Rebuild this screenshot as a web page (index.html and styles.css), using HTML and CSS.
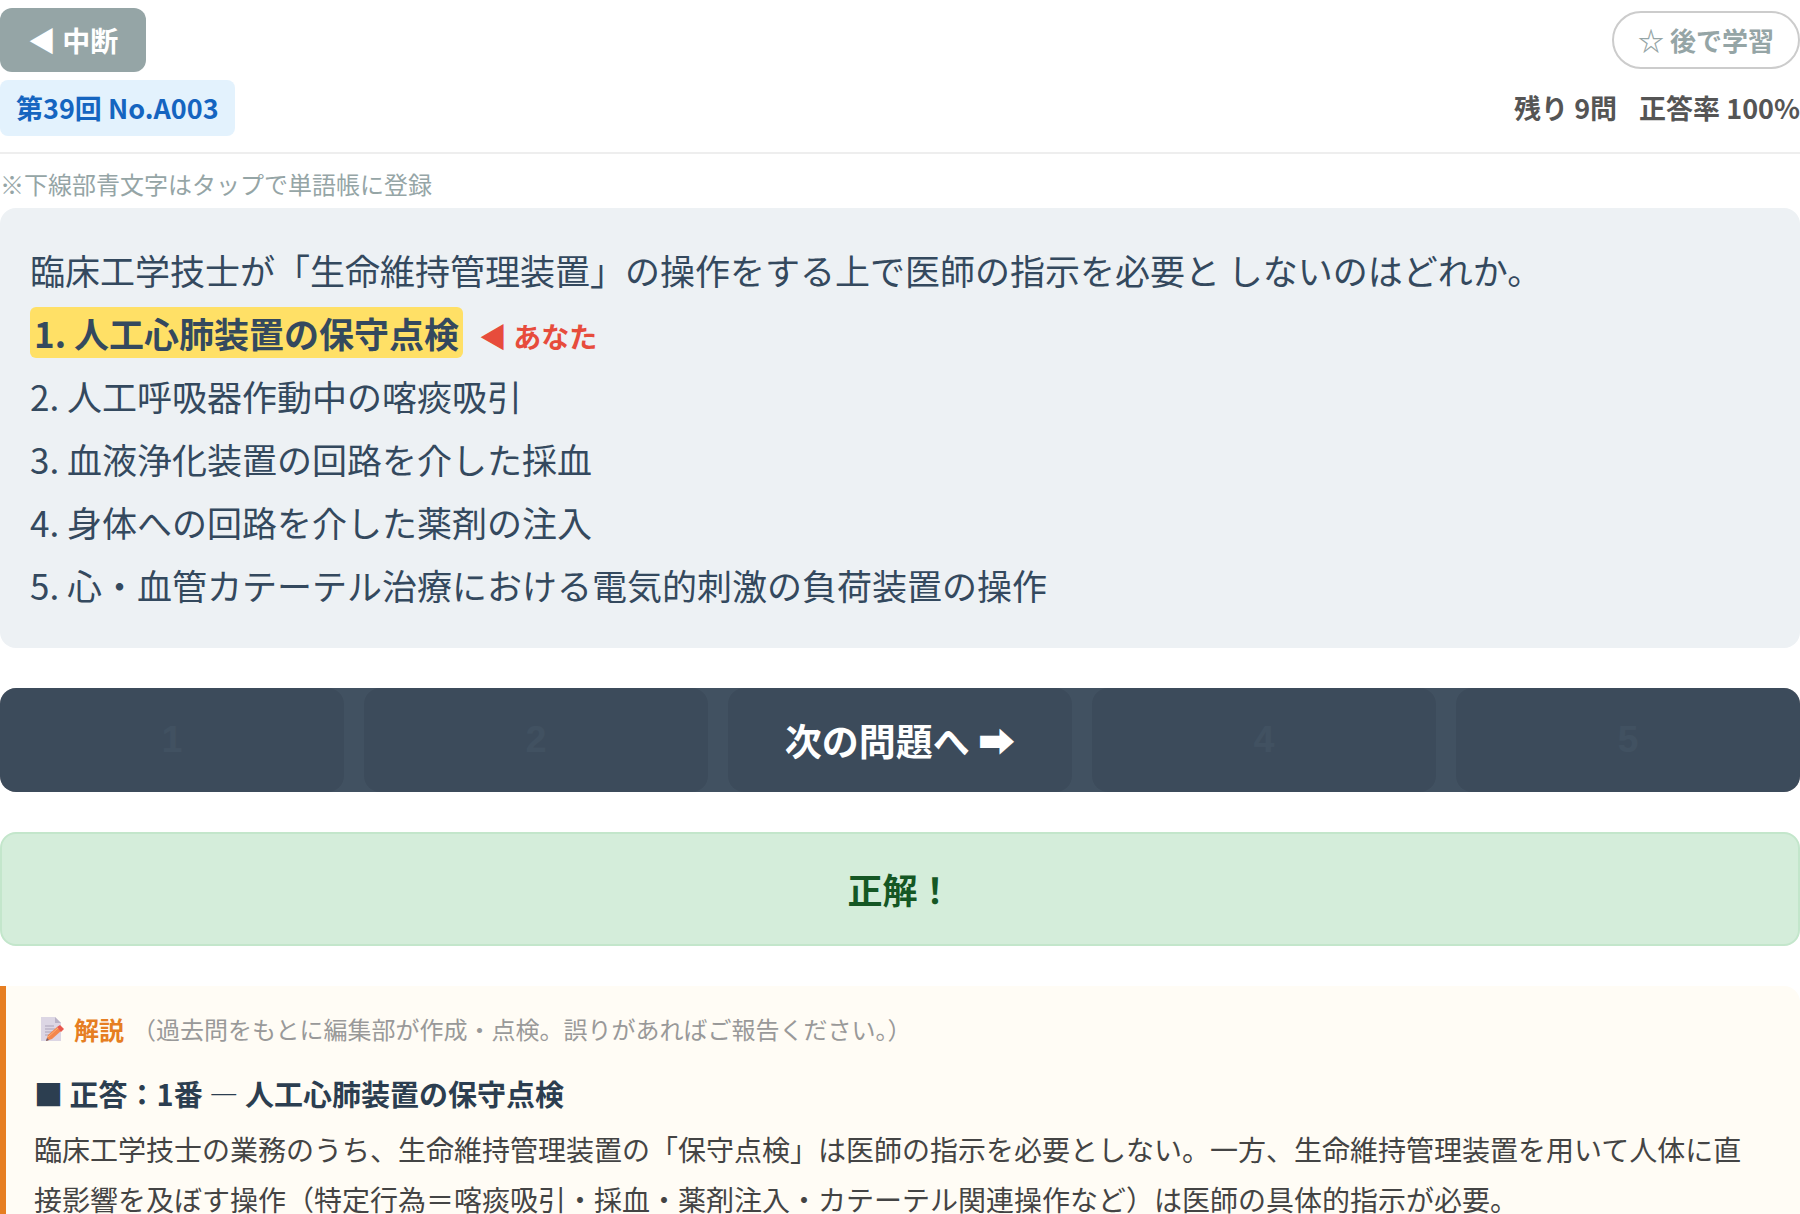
FILE: index.html
```
<!DOCTYPE html>
<html lang="ja">
<head>
    <meta charset="UTF-8">
    <meta name="viewport" content="width=device-width, initial-scale=1.0">
    <title>臨床工学技士 過去問</title>
    <link rel="stylesheet" href="styles.css">
</head>
<body>
    <header class="header">
        <div class="header-row">
            <button type="button" class="quit-btn">◀ 中断</button>
            <button type="button" class="later-btn">☆ 後で学習</button>
        </div>
        <div class="header-row">
            <span class="badge">第39回 No.A003</span>
            <div class="stats">
                <span>残り 9問</span>
                <span>正答率 100%</span>
            </div>
        </div>
    </header>
    <p class="note">※下線部青文字はタップで単語帳に登録</p>
    <div class="question">
        <p>臨床工学技士が「生命維持管理装置」の操作をする上で医師の指示を必要と しないのはどれか。</p>
        <p><span class="correct">1. 人工心肺装置の保守点検</span><span class="your-mark">◀ あなた</span></p>
        <p>2. 人工呼吸器作動中の喀痰吸引</p>
        <p>3. 血液浄化装置の回路を介した採血</p>
        <p>4. 身体への回路を介した薬剤の注入</p>
        <p>5. 心・血管カテーテル治療における電気的刺激の負荷装置の操作</p>
    </div>
    <div class="answers">
        <button type="button" class="answer-btn" disabled>1</button>
        <button type="button" class="answer-btn" disabled>2</button>
        <button type="button" class="answer-btn" aria-label="3" disabled></button>
        <button type="button" class="answer-btn" disabled>4</button>
        <button type="button" class="answer-btn" disabled>5</button>
        <!-- covers the answer buttons once answered -->
        <button type="button" class="next-btn">次の問題へ ➡</button>
    </div>
    <div class="result">正解！</div>
    <section class="explanation">
        <div class="exp-title">
            <svg class="memo-icon" viewBox="0 0 24 26" aria-hidden="true">
                <path d="M1 1h14l6 6v18H1z" fill="#dcd6e4"/>
                <path d="M15 1l6 6h-6z" fill="#b9b2c6"/>
                <path d="M5 10h9M5 13h10M5 16h7M5 19h4" stroke="#aaa2b8" stroke-width="1"/>
                <path d="M6 25l2-6 9-8 4 4-9 8z" fill="#f4874b"/>
                <path d="M8 21l10-9" stroke="#fbb078" stroke-width="1"/>
                <path d="M17 11l3-2 4 4-3 3z" fill="#e9574d"/>
                <path d="M6 25l1-3 2 2z" fill="#6b5f73"/>
            </svg>
            <strong>解説</strong>
            <span class="exp-sub">（過去問をもとに編集部が作成・点検。誤りがあればご報告ください。）</span>
        </div>
        <h3>■ 正答：1番 <span class="dash">―</span> 人工心肺装置の保守点検</h3>
        <p>臨床工学技士の業務のうち、生命維持管理装置の「保守点検」は医師の指示を必要としない。一方、生命維持管理装置を用いて人体に直接影響を及ぼす操作（特定行為＝喀痰吸引・採血・薬剤注入・カテーテル関連操作など）は医師の具体的指示が必要。</p>
    </section>
</body>
</html>
```
FILE: styles.css
```
* {
    padding: 0;
    margin: 0;
    box-sizing: border-box;
}
body {
    font-family: "Noto Sans CJK JP", sans-serif;
    background: #fff;
    color: #34495e;
}
button {
    font-family: inherit;
    font-weight: bold;
    cursor: pointer;
}
.header {
    display: flex;
    flex-direction: column;
    gap: 8px;
    padding: 8px 0 16px;
    border-bottom: 2px solid #eee;
}
.header-row {
    display: flex;
    justify-content: space-between;
    align-items: center;
}
.quit-btn {
    background: #95a5a6;
    color: white;
    border: none;
    border-radius: 12px;
    padding: 12px 28px;
    font-size: 28px;
    line-height: 40px;
}
.later-btn {
    background: white;
    color: #95a5a6;
    border: 2px solid #ccc;
    border-radius: 40px;
    padding: 8px 24px;
    font-size: 26px;
    line-height: 38px;
}
.badge {
    background: #e3f2fd;
    color: #1565c0;
    border-radius: 8px;
    padding: 8px 16px;
    font-size: 27px;
    font-weight: bold;
    line-height: 40px;
}
.stats {
    display: flex;
    gap: 22px;
    color: #555;
    font-size: 27px;
    font-weight: bold;
    line-height: 40px;
}
.note {
    margin: 12px 0 6px;
    color: #95a5a6;
    font-size: 24px;
    line-height: 36px;
}
.question {
    background: #edf1f4;
    border-radius: 16px;
    padding: 30px 30px 32px;
    font-size: 35px;
    line-height: 63px;
}
.correct {
    background: #ffe066;
    border-radius: 6px;
    padding: 0 4px;
    font-weight: bold;
}
.your-mark {
    margin-left: 16px;
    color: #e74c3c;
    font-size: 28px;
    font-weight: bold;
    line-height: 1;
}
.answers {
    position: relative;
    display: grid;
    grid-template-columns: repeat(5, 1fr);
    gap: 20px;
    margin: 40px 0;
}
.answer-btn {
    height: 104px;
    background: #ccc0be;
    color: #fff;
    border: none;
    border-radius: 16px;
    font-family: "Liberation Sans", Arial, sans-serif;
    font-size: 37px;
}
.next-btn {
    position: absolute;
    inset: 0;
    background: rgba(44, 62, 80, 0.9);
    color: white;
    border: none;
    border-radius: 16px;
    font-size: 37px;
}
.result {
    background: #d4edda;
    color: #155724;
    border: 2px solid #c3e6cb;
    border-radius: 16px;
    padding: 30px;
    font-size: 35px;
    font-weight: bold;
    line-height: 50px;
    text-align: center;
}
.explanation {
    margin-top: 40px;
    background: #fffcf5;
    border-left: 6px solid #e67e22;
    border-radius: 0 16px 16px 0;
    padding: 23px 36px 28px 28px;
    color: #444;
    font-size: 28px;
    line-height: 50px;
}
.exp-title {
    display: flex;
    align-items: center;
    padding-left: 6px;
    font-size: 24px;
    line-height: 40px;
}
.exp-title strong {
    margin: 0 8px 0 10px;
    color: #e67e22;
    font-size: 25px;
}
.exp-sub {
    color: #999;
}
.memo-icon {
    width: 24px;
    height: 26px;
}
.explanation h3 {
    margin: 19px 0 6px;
    color: #2c3e50;
    font-size: 29px;
}
.dash {
    font-weight: normal;
}
```
